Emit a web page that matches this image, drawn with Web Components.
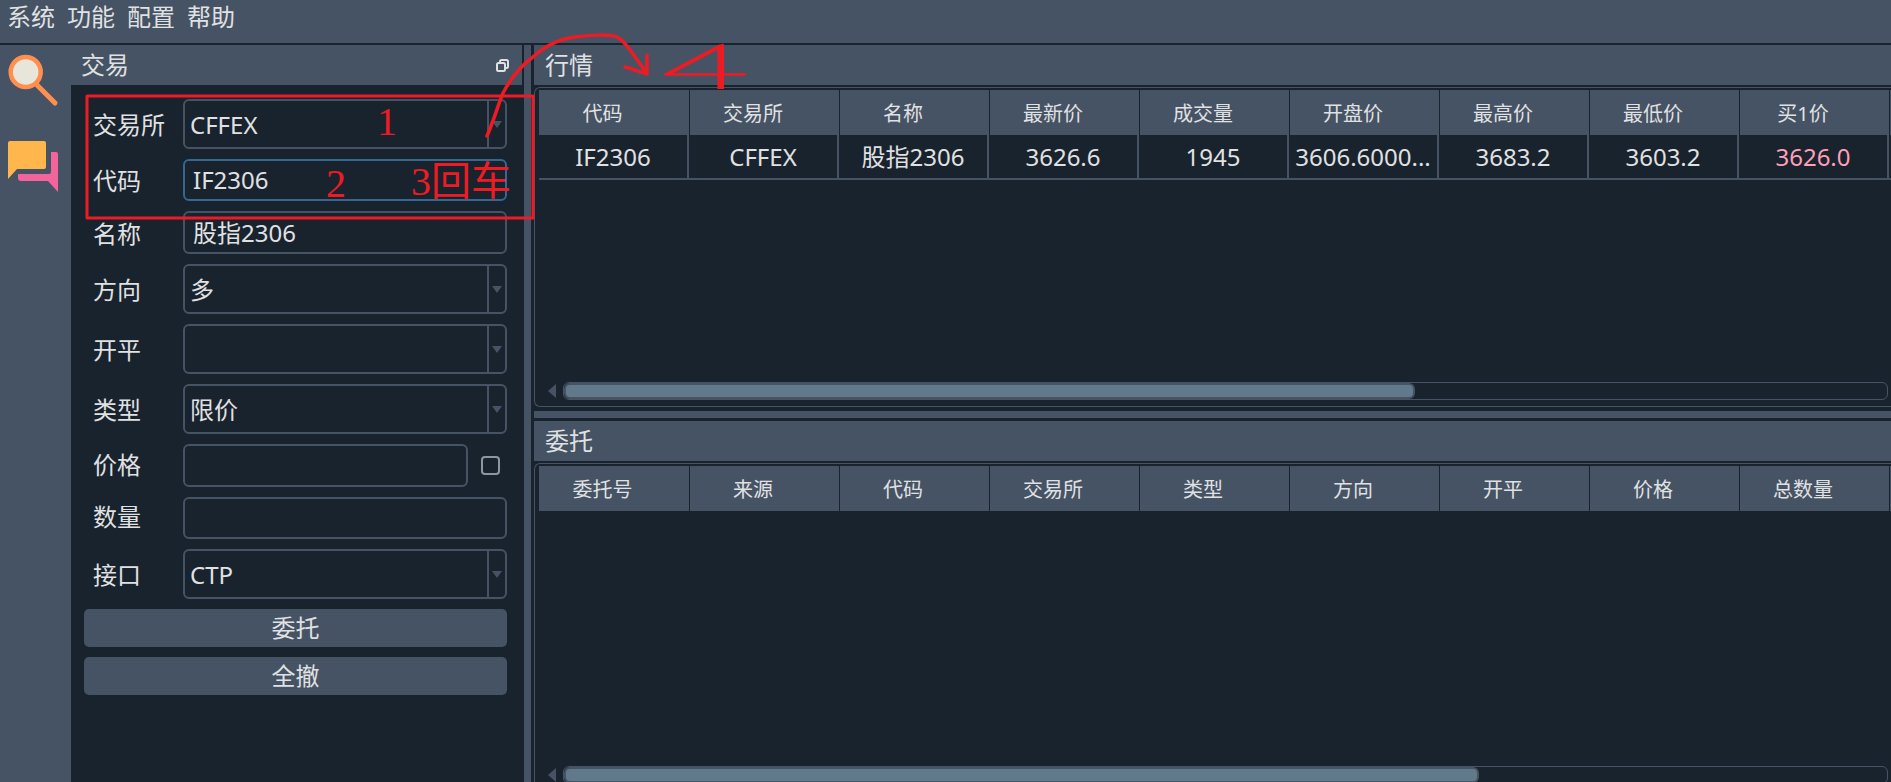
<!DOCTYPE html>
<html lang="zh"><head><meta charset="utf-8">
<style>
html,body{margin:0;height:100%;overflow:hidden;background:#19232d}
body{font-family:"Noto Sans","Noto Sans CJK SC",sans-serif;font-size:24px;color:#e0e1e3;width:1891px;height:782px;position:relative}
</style></head><body>
<app-shell>
  <menu-bar slot="menu"><span>系统</span><span>功能</span><span>配置</span><span>帮助</span></menu-bar>
  <side-toolbar slot="side"></side-toolbar>
  <dock-panel slot="left" title="交易" floatable>
    <order-form></order-form>
  </dock-panel>
  <dock-panel slot="top" title="行情" style="--pad:11px">
    <data-table thumb="851" cols="代码|交易所|名称|最新价|成交量|开盘价|最高价|最低价|买1价|"
      row="IF2306|CFFEX|股指2306|3626.6|1945|3606.6000...|3683.2|3603.2|3626.0|"></data-table>
  </dock-panel>
  <dock-panel slot="bottom" title="委托" style="--pad:11px">
    <data-table cut thumb="915" cols="委托号|来源|代码|交易所|类型|方向|开平|价格|总数量|"></data-table>
  </dock-panel>
</app-shell>
<mark-layer></mark-layer>
<script>
function def(name,css,html,init){
  customElements.define(name,class extends HTMLElement{
    constructor(){super();const r=this.attachShadow({mode:'open'});r.innerHTML='<style>'+css+'</style>'+(typeof html==='function'?html(this):html);}
  });
}
def('app-shell',`
:host{display:grid;width:1891px;height:782px;grid-template-columns:71px 451px 2px 7px 3px 1357px;grid-template-rows:43px 2px 366px 7px 3px 361px;background:#19232d;overflow:hidden}
.menu{grid-column:1/-1;grid-row:1}
.side{grid-column:1;grid-row:3/-1;background:#455364}
.left{grid-column:2;grid-row:3/-1;min-width:0}
.vs{grid-column:4;grid-row:3/-1;background:#455364}
.top{grid-column:6;grid-row:3;min-width:0;min-height:0}
.hs{grid-column:6;grid-row:4;background:#455364}
.bottom{grid-column:6;grid-row:6;min-width:0;min-height:0}
`,`<div class="menu"><slot name="menu"></slot></div><div class="side"><slot name="side"></slot></div>
<div class="left"><slot name="left"></slot></div><div class="vs"></div>
<div class="top"><slot name="top"></slot></div><div class="hs"></div><div class="bottom"><slot name="bottom"></slot></div>`);

def('menu-bar',`
:host{display:flex;height:43px;background:#455364;align-items:center;padding:0 0 9px 7px;gap:12px;box-sizing:border-box;line-height:1;color:#e0e1e3}
::slotted(span){display:block}
`,`<slot></slot>`);

def('side-toolbar',`
:host{display:block;height:100%}
svg{display:block}
`,`<svg width="71" height="160" viewBox="0 0 71 160">
<line x1="36" y1="39" x2="55" y2="58" stroke="#ff8f4f" stroke-width="5" stroke-linecap="round"/>
<circle cx="25.7" cy="27" r="15" fill="#e8e6da" stroke="#ff8f4f" stroke-width="4.5"/>
<path d="M10 96H44a2 2 0 0 1 2 2V122a2 2 0 0 1-2 2H17L8 134V98a2 2 0 0 1 2-2z" fill="#ffb74d"/>
<path d="M51 107H56a2 2 0 0 1 2 2V147L48 136H21a3 3 0 0 1-3-3V129H49a2 2 0 0 0 2-2z" fill="#f2649b"/>
</svg>`);

def('dock-panel',`
:host{display:flex;flex-direction:column;height:100%;min-height:0;background:#19232d}
.t{flex:none;height:40px;background:#455364;display:flex;align-items:center;padding:0 13px 0 var(--pad,10px);line-height:1}
.l{flex:1}
.b{flex:1;min-height:0;display:flex;flex-direction:column}
svg{display:block}
`,e=>`<div class="t"><span class="l">${e.getAttribute('title')}</span>${e.hasAttribute('floatable')?`<svg width="13" height="13" viewBox="0 0 13 13" fill="none" stroke="#e0e1e3" stroke-width="2"><rect x="4" y="1" width="8" height="8" rx="1.5"/><rect x="1" y="4" width="8" height="8" rx="1.5" fill="#455364"/></svg>`:''}</div><div class="b"><slot></slot></div>`);

def('order-row',`
:host{display:grid;grid-template-columns:99px 324px;align-items:center;line-height:1}
.lab{padding:2px 0 0 9px}
:host([flat]) .lab{padding:0 0 2px 9px}
`,e=>`<div class="lab">${e.getAttribute('label')}</div><slot></slot>`);

def('combo-box',`
:host{display:flex;box-sizing:border-box;height:50px;border:2px solid #455364;border-radius:6px;line-height:1;align-items:center}
.v{flex:1;padding:1px 0 0 5px;white-space:nowrap}
.a{flex:none;width:16px;align-self:stretch;border-left:2px solid #455364;display:flex;align-items:center;justify-content:center}
.a i{display:block;width:0;height:0;border:5px solid transparent;border-top:7px solid #455364;border-bottom:0}
`,`<div class="v"><slot></slot></div><div class="a"><i></i></div>`);

def('line-edit',`
:host{display:flex;box-sizing:border-box;height:43px;border:2px solid #455364;border-radius:6px;align-items:center;line-height:1;padding:0 0 0 8px}
:host([focus]){border-color:#346792}
:host([short]){height:42px}
`,`<slot></slot>`);

def('check-box',`
:host{display:block;box-sizing:border-box;width:19px;height:19px;border:2px solid #8c97a3;border-radius:4px}
`,``);

def('action-button',`
:host{display:flex;height:38px;background:#455364;border-radius:5px;align-items:center;justify-content:center;line-height:1;box-sizing:border-box}
`,`<slot></slot>`);

def('order-form',`
:host{display:flex;flex-direction:column;gap:10px;padding:14px 15px 0 13px;box-sizing:border-box;width:451px}
.p{display:flex;align-items:center;gap:13px}
.p line-edit{width:285px}
`,`<order-row label="交易所"><combo-box>CFFEX</combo-box></order-row>
<order-row label="代码"><line-edit focus short>IF2306</line-edit></order-row>
<order-row label="名称"><line-edit>股指2306</line-edit></order-row>
<order-row label="方向"><combo-box>多</combo-box></order-row>
<order-row label="开平"><combo-box></combo-box></order-row>
<order-row label="类型"><combo-box>限价</combo-box></order-row>
<order-row label="价格" flat><div class="p"><line-edit></line-edit><check-box></check-box></div></order-row>
<order-row label="数量" flat><line-edit short></line-edit></order-row>
<order-row label="接口"><combo-box>CTP</combo-box></order-row>
<action-button>委托</action-button>
<action-button>全撤</action-button>`);

def('data-table',`
:host{display:flex;flex-direction:column;flex:1;min-height:0;box-sizing:border-box;margin:2px 0 4px;border:1px solid #455364;border-radius:6px 0 0 6px;border-right:0;padding:2px 0 0 4px;overflow:hidden;position:relative}
:host([cut]){margin-bottom:0;border-bottom:0;border-radius:6px 0 0 0}
.grid{flex:1;min-height:0;overflow:hidden}
.r{display:grid;width:1500px}
.h{height:45px;background:#455364;font-size:20px;grid-template-columns:151px repeat(9,150px)}
.h div{display:flex;align-items:center;justify-content:center;border-right:1px solid #19232d;line-height:1;padding-top:2px;padding-right:23px;box-sizing:border-box}
.d{height:45px;box-sizing:border-box;border-bottom:2px solid #455364;font-size:24px;grid-template-columns:repeat(10,150px)}
.d div{display:flex;align-items:center;justify-content:center;border-right:2px solid #455364;line-height:1;box-sizing:border-box;white-space:nowrap;overflow:hidden;padding-top:1px}
.pink{color:#ff9fb8}
.sb{flex:none;height:18px;margin:0 3px 6px 9px;display:flex;align-items:center;gap:7px}
:host([cut]) .sb{margin-bottom:-2px}
.ar{flex:none;width:0;height:0;border:7.5px solid transparent;border-right:8px solid #455364;border-left:0}
.tr{flex:1;height:18px;box-sizing:border-box;border:1px solid #455364;border-radius:6px}
.th{height:16px;box-sizing:border-box;background:#60798b;border:2px solid #455364;border-radius:6px}
`,e=>{
 const c=e.getAttribute('cols').split('|'),r=e.getAttribute('row');
 return `<div class="grid"><div class="r h">${c.map(x=>`<div>${x}</div>`).join('')}</div>${r?`<div class="r d">${r.split('|').map((x,i)=>`<div class="${i==8?'pink':''}">${x}</div>`).join('')}</div>`:''}</div>
 <div class="sb"><i class="ar"></i><div class="tr"><div class="th" style="width:${e.getAttribute('thumb')}px"></div></div></div>`;
});

def('mark-layer',`
:host{position:absolute;left:0;top:0;width:1891px;height:782px;pointer-events:none;color:#ed1c24;font-family:"Liberation Serif","Noto Sans CJK SC",serif;font-size:40px;line-height:1}
span{position:absolute;white-space:nowrap}
svg{position:absolute;left:0;top:0}
.four{font-family:Lato,sans-serif;font-weight:100;font-size:60px;left:662px;top:35px;transform-origin:0 0;transform:scaleX(2.5);-webkit-text-stroke:2px #ed1c24}
`,`<svg width="1891" height="782" fill="none" stroke="#ed1c24" stroke-width="3" stroke-linecap="round" stroke-linejoin="round">
<rect x="87" y="96" width="446" height="122"/>
<path stroke-width="3.5" d="M487 136C494 120 498 105 503 93C512 76 522 65 533 57C545 46 558 39 575 37C590 35 610 34 617 37C627 42 636 60 647 73M625 67C633 69 640 72 647 74C647 68 647 62 647 55"/>
</svg>
<span style="left:377px;top:102px">1</span>
<span style="left:326px;top:164px">2</span>
<span style="left:411px;top:162px">3回车</span>
<span class="four">4</span>`);
</script>
</body></html>
